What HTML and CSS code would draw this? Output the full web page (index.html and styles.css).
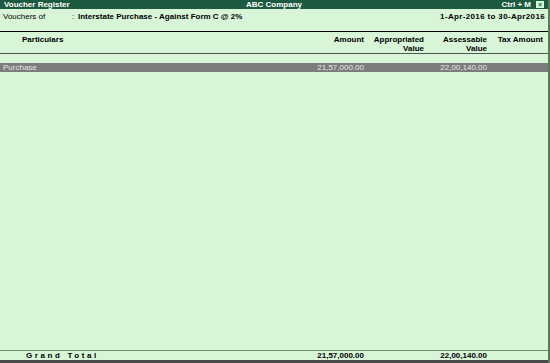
FILE: index.html
```html
<!DOCTYPE html>
<html>
<head>
<meta charset="utf-8">
<link rel="stylesheet" href="styles.css">
</head>
<body>
<div class="screen">
  <div class="titlebar">
    <span class="t-left">Voucher Register</span>
    <span class="t-center">ABC Company</span>
    <span class="t-right">Ctrl + M <span class="close">×</span></span>
  </div>
  <div class="info">
    <span class="lbl">Vouchers of</span>
    <span class="colon">:</span>
    <span class="vtype">Interstate Purchase - Against Form C @ 2%</span>
    <span class="period">1-Apr-2016 to 30-Apr2016</span>
  </div>
  <div class="head">
    <div class="c-part">Particulars</div>
    <div class="c-amt">Amount</div>
    <div class="c-app">Appropriated<br>Value</div>
    <div class="c-ass">Assessable<br>Value</div>
    <div class="c-tax">Tax Amount</div>
  </div>
  <div class="body">
    <div class="row sel">
      <div class="c-part">Purchase</div>
      <div class="c-amt">21,57,000.00</div>
      <div class="c-app"></div>
      <div class="c-ass">22,00,140.00</div>
      <div class="c-tax"></div>
    </div>
  </div>
  <div class="row total">
    <div class="c-part gt">Grand Total</div>
    <div class="c-amt">21,57,000.00</div>
    <div class="c-app"></div>
    <div class="c-ass">22,00,140.00</div>
    <div class="c-tax"></div>
  </div>
</div>
</body>
</html>
```
FILE: styles.css
```css
* { box-sizing: border-box; }
html, body { margin: 0; padding: 0; }
body {
  width: 550px;
  height: 363px;
  overflow: hidden;
  background: #d8f5d8;
  font-family: "Liberation Sans", Arial, sans-serif;
  font-size: 8px;
  color: #000;
}
.screen {
  width: 550px;
  height: 363px;
  display: flex;
  flex-direction: column;
  border-right: 2px solid #5a7a5a;
}
.titlebar {
  height: 9px;
  background: #1d5a40;
  color: #fff;
  font-weight: bold;
  display: flex;
  align-items: center;
  padding: 0 4px;
  line-height: 9px;
  position: relative;
}
.t-left { flex: 1; }
.t-center { position: absolute; left: 0; right: 0; text-align: center; }
.t-right { display: flex; align-items: center; gap: 5px; }
.close {
  display: inline-block;
  width: 8px; height: 7px;
  border: 1px solid #cfd;
  background: #d8f5d8;
  color: #1d5a40;
  font-size: 7px;
  line-height: 5px;
  text-align: center;
}
.info {
  height: 23px;
  display: flex;
  padding: 3px 3px 0 3px;
  line-height: 9px;
  border-bottom: 1px solid #000;
}
.lbl { width: 69px; }
.colon { width: 6px; }
.vtype { font-weight: bold; flex: 1; }
.period { font-weight: bold; letter-spacing: 0.35px; }
.head {
  height: 22px;
  display: flex;
  font-weight: bold;
  line-height: 9px;
  padding-top: 3px;
  border-bottom: 1px solid #555;
}
.c-part { flex: 1; }
.head .c-part { padding-left: 22px; }
.c-amt { width: 60px; text-align: right; }
.c-app { width: 60px; text-align: right; }
.c-ass { width: 63px; text-align: right; }
.c-tax { width: 61px; text-align: right; padding-right: 5px; }
.body {
  flex: 1;
  padding-top: 9px;
}
.row {
  display: flex;
  height: 9px;
  line-height: 9px;
}
.sel {
  background: #7c7c7c;
  color: #e8e8e8;
}
.sel .c-part { padding-left: 3px; }
.total {
  height: 13px;
  border-top: 1px solid #6f8f6f;
  border-bottom: 3px solid #4a4a4a;
  font-weight: bold;
}
.gt { padding-left: 26px; letter-spacing: 2.6px; }
```
